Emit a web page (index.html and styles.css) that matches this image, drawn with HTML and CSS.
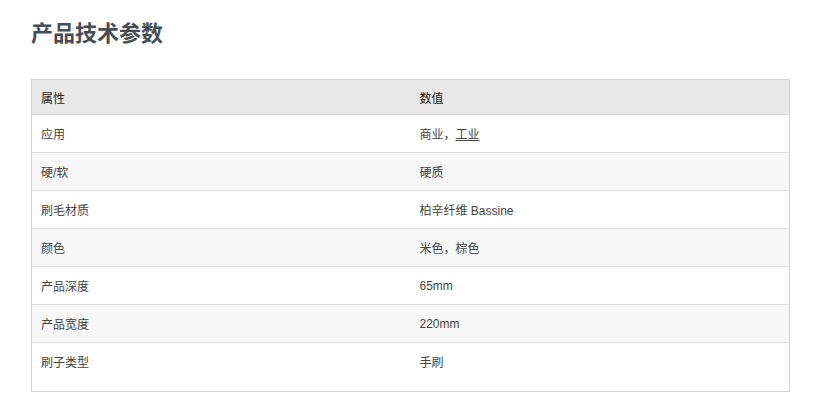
FILE: index.html
```html
<!DOCTYPE html>
<html lang="zh">
<head>
<meta charset="utf-8">
<link rel="stylesheet" href="styles.css">
</head>
<body>
<div class="page">
  <h2 class="title">产品技术参数</h2>
  <div class="table-wrap">
    <table class="spec">
      <thead>
        <tr><th>属性</th><th>数值</th></tr>
      </thead>
      <tbody>
        <tr><td>应用</td><td>商业，<a href="#" class="link">工业</a></td></tr>
        <tr><td>硬/软</td><td>硬质</td></tr>
        <tr><td>刷毛材质</td><td>柏辛纤维 Bassine</td></tr>
        <tr><td>颜色</td><td>米色，棕色</td></tr>
        <tr><td>产品深度</td><td>65mm</td></tr>
        <tr><td>产品宽度</td><td>220mm</td></tr>
        <tr><td>刷子类型</td><td>手刷</td></tr>
      </tbody>
    </table>
  </div>
</div>
</body>
</html>
```
FILE: styles.css
```css
html, body {
  margin: 0;
  padding: 0;
  background: #fff;
}
body {
  font-family: "Liberation Sans", "Noto Sans CJK SC", sans-serif;
  color: #333;
}
.page {
  padding: 19px 23px 0 31px;
}
.title {
  margin: 0 0 30px 0;
  font-size: 22px;
  line-height: 30px;
  font-weight: bold;
  color: #454e57;
}
.table-wrap {
  width: 757px;
  border: 1px solid #d4d4d4;
  padding-bottom: 11px;
}
.spec {
  width: 100%;
  border-collapse: collapse;
  table-layout: fixed;
  font-size: 12px;
}
.spec th, .spec td {
  text-align: left;
  padding: 0 9px;
  vertical-align: middle;
}
.spec th {
  height: 34px;
  background: #e8e8e8;
  font-weight: normal;
  color: #222;
  border-bottom: 1px solid #d6d6d6;
}
.spec td {
  height: 37px;
  border-bottom: 1px solid #dedede;
  color: #444;
}
.spec tbody tr:nth-child(even) td {
  background: #f7f7f7;
}
.spec tbody tr:last-child td {
  border-bottom: none;
}
.link {
  color: #444;
  text-decoration: underline;
}
```
